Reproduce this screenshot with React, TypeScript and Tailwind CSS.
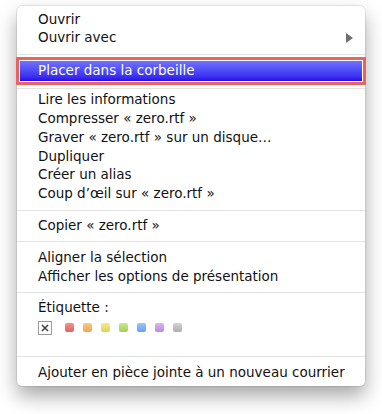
const font = { fontFamily: '"DejaVu Sans", "Liberation Sans", sans-serif' };

function Item({ label, arrow }: { label: string; arrow?: boolean }) {
  return (
    <div className="h-[18.8px] flex items-center justify-between pl-[21px] pr-[12px] text-[13.5px] leading-none text-[#111] whitespace-nowrap">
      <span>{label}</span>
      {arrow && (
        <svg width="7" height="10" viewBox="0 0 7 10">
          <polygon points="0,0 7,5 0,10" fill="#6f6f6f" />
        </svg>
      )}
    </div>
  );
}

function Sep({ className }: { className: string }) {
  return (
    <div className={className}>
      <div className="h-px bg-[#e3e3e3]" />
    </div>
  );
}

const swatches = [
  ['#f4908e', '#e8605e'],
  ['#f7c98a', '#eea74c'],
  ['#f3ea8c', '#e2d352'],
  ['#cce68e', '#a6cf58'],
  ['#9cc4f7', '#6a9ff0'],
  ['#d8b6f0', '#b98ae0'],
  ['#d4d4d4', '#adadad'],
];

export default function App() {
  return (
    <div className="min-h-screen bg-white pt-[6px] pl-[17px]" style={font}>
      <div className="w-[348px] bg-white rounded-[5px] pt-[4px] pb-[4px] shadow-[0_0_0_1px_rgba(0,0,0,0.08),0_10px_20px_rgba(0,0,0,0.35)]">
        <Item label="Ouvrir" />
        <Item label="Ouvrir avec" arrow />
        <Sep className="pt-[6px] pb-[2px]" />

        <div className="border-[3px] border-[#e8645d] p-px bg-white -mx-px">
          <div className="h-[20px] flex items-center pl-[18px] text-[13.5px] leading-none text-white bg-gradient-to-b from-[#736fff] to-[#3000ec]">
            Placer dans la corbeille
          </div>
        </div>

        <Sep className="pt-[3px] pb-[2px]" />
        <Item label="Lire les informations" />
        <Item label="Compresser « zero.rtf »" />
        <Item label="Graver « zero.rtf » sur un disque…" />
        <Item label="Dupliquer" />
        <Item label="Créer un alias" />
        <Item label="Coup d’œil sur « zero.rtf »" />
        <Sep className="pt-[7px] pb-[5px]" />
        <Item label="Copier « zero.rtf »" />
        <Sep className="pt-[6px] pb-[6px]" />
        <Item label="Aligner la sélection" />
        <Item label="Afficher les options de présentation" />
        <Sep className="pt-[6px] pb-[6px]" />
        <Item label="Étiquette :" />

        <div className="h-[20px] flex items-center pl-[21px]">
          <div className="w-[14px] h-[14px] border border-[#9a9a9a] bg-white flex items-center justify-center">
            <svg width="8" height="8" viewBox="0 0 8 8">
              <path d="M1 1 L7 7 M7 1 L1 7" stroke="#444" strokeWidth="1.6" />
            </svg>
          </div>
          <div className="flex gap-[9px] ml-[13px]">
            {swatches.map(([a, b]) => (
              <div
                key={a}
                className="w-[9px] h-[9px] rounded-[2px]"
                style={{ background: `linear-gradient(${a}, ${b})` }}
              />
            ))}
          </div>
        </div>

        <Sep className="pt-[18px] pb-[7px]" />
        <Item label="Ajouter en pièce jointe à un nouveau courrier" />
      </div>
    </div>
  );
}
